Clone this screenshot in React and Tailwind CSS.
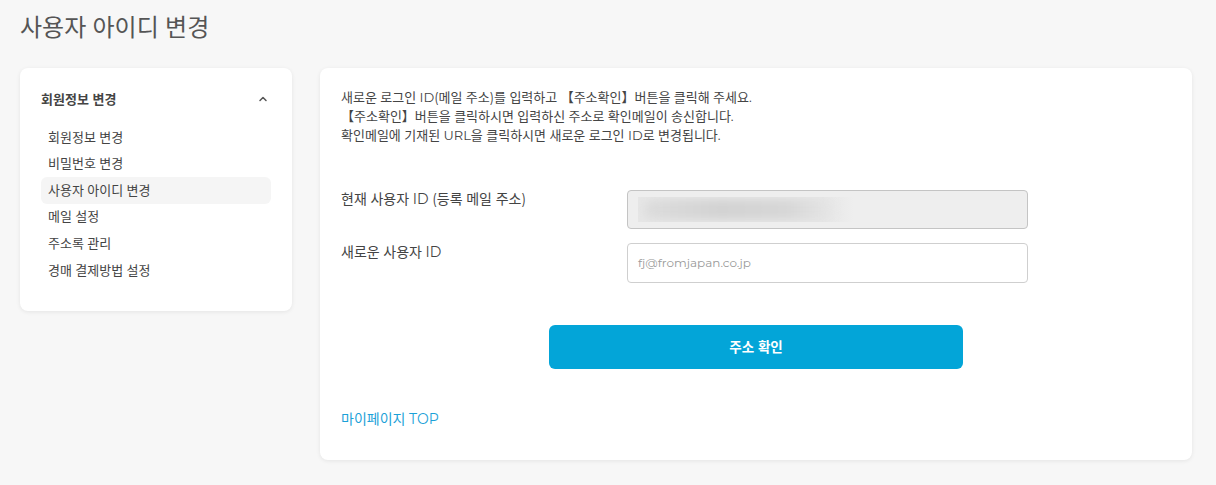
import React from "react";

const font = { fontFamily: '"Montserrat","Noto Sans","Noto Sans CJK KR",sans-serif' };

export default function App() {
  const items = ["회원정보 변경", "비밀번호 변경", "사용자 아이디 변경", "메일 설정", "주소록 관리", "경매 결제방법 설정"];
  return (
    <div className="min-h-[485px] w-[1216px] bg-[#f7f7f7] text-[#444]" style={font}>
      <h1 className="px-5 pt-[12px] text-[24px] leading-[32px] text-[#555] font-normal">사용자 아이디 변경</h1>
      <div className="mt-[24px] flex items-start gap-7 px-5">
        <aside className="w-[272px] rounded-lg bg-white px-[21px] pt-[20px] pb-[27px] shadow-[0_1px_4px_rgba(0,0,0,0.08)]">
          <div className="flex items-center justify-between pr-[2px]">
            <span className="text-[13px] font-bold leading-[22px] text-[#444]">회원정보 변경</span>
            <svg width="12" height="12" viewBox="0 0 12 12" fill="none" stroke="#555" strokeWidth="1.5" strokeLinecap="round" strokeLinejoin="round">
              <path d="M3 7.5 L6 4.5 L9 7.5" />
            </svg>
          </div>
          <ul className="mt-[14px] flex flex-col">
            {items.map((t, i) => (
              <li
                key={t}
                className={`flex h-[26.6px] items-center rounded-md px-[7px] text-[13px] text-[#444] ${i === 2 ? "bg-[#f5f5f5]" : ""}`}
              >
                {t}
              </li>
            ))}
          </ul>
        </aside>
        <main className="h-[392px] w-[872px] rounded-lg bg-white px-[21px] pt-[20px] shadow-[0_1px_4px_rgba(0,0,0,0.08)]">
          <div className="text-[13px] leading-[19px] text-[#444]">
            <p>새로운 로그인 ID(메일 주소)를 입력하고 【주소확인】버튼을 클릭해 주세요.</p>
            <p>【주소확인】버튼을 클릭하시면 입력하신 주소로 확인메일이 송신합니다.</p>
            <p>확인메일에 기재된 URL을 클릭하시면 새로운 로그인 ID로 변경됩니다.</p>
          </div>
          <div className="mt-[45px] flex flex-col gap-[14px]">
            <div className="flex items-start">
              <label className="w-[286px] pt-[1px] text-[14px] leading-[16px] text-[#444]">현재 사용자 ID (등록 메일 주소)</label>
              <div className="flex h-[39px] w-[401px] items-center rounded-[4px] border border-[#c4c4c4] bg-[#eeeeee] px-[10px]">
                <div className="relative h-[25px] w-[216px] overflow-hidden bg-[linear-gradient(90deg,#e6e6e6_0%,#e6e6e6_85%,#eeeeee_100%)]">
                  <div className="absolute inset-y-[3px] left-[6px] w-[190px] rounded-full bg-[linear-gradient(90deg,#dcdcdc_0%,#d2d2d2_40%,#d6d6d6_75%,#e6e6e6_100%)] blur-[4px]" />
                </div>
              </div>
            </div>
            <div className="flex items-start">
              <label className="w-[286px] pt-[1px] text-[14px] leading-[16px] text-[#444]">새로운 사용자 ID</label>
              <div className="flex h-[40px] w-[401px] items-center rounded-[4px] border border-[#cfcfcf] bg-white px-[10px]">
                <span className="text-[12px] text-[#9a9a9a]">fj@fromjapan.co.jp</span>
              </div>
            </div>
          </div>
          <div className="mt-[42px] flex justify-center">
            <button className="h-[44px] w-[414px] rounded-md bg-[#03a5d8] text-[13.5px] font-bold text-white">주소 확인</button>
          </div>
          <a className="mt-[40px] block text-[14px] leading-[20px] text-[#1ba1d8]">마이페이지 TOP</a>
        </main>
      </div>
    </div>
  );
}
